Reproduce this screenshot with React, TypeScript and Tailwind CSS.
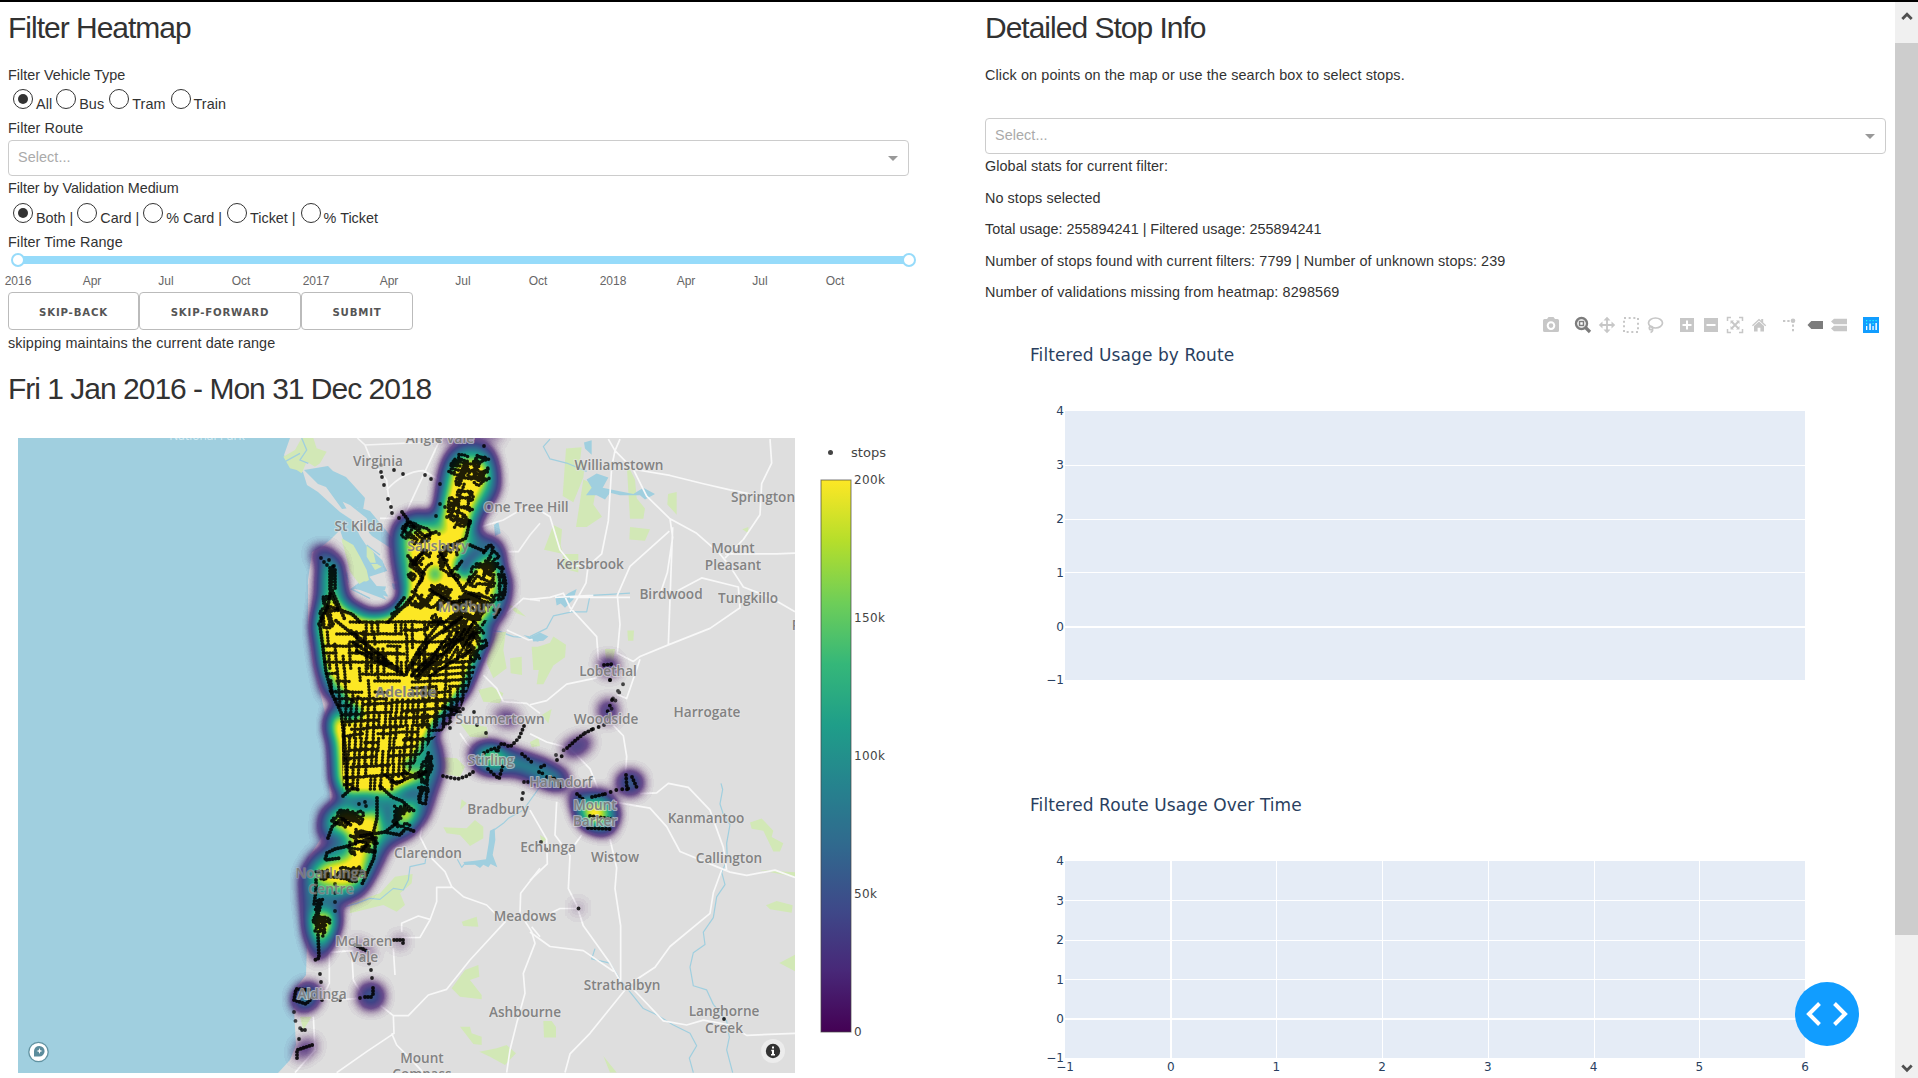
import React from "react";

type Pt = [number, number];

/* ---------- stop network ---------- */

function makeRandom(seed: number) {
  let s = seed;
  return () => {
    s = (s * 1664525 + 1013904223) % 4294967296;
    return s / 4294967296;
  };
}

// Suburbs: centre x, centre y, radius x, radius y, street angle, number of street runs
const SUBURBS: number[][] = [
  [470, 470, 22, 18, 20, 9],
  [481, 472, 10, 16, 60, 4],
  [461, 505, 13, 25, 15, 9],
  [416, 533, 15, 12, 35, 5],
  [422, 570, 15, 22, 40, 6],
  [450, 563, 12, 20, 35, 6],
  [437, 598, 30, 13, 40, 12],
  [482, 578, 14, 16, 20, 6],
  [490, 560, 9, 17, 45, 6],
  [499, 584, 7, 20, 5, 4],
  [474, 607, 26, 14, 30, 12],
  [452, 630, 28, 18, 50, 10],
  [474, 642, 14, 18, 50, 7],
  [329, 612, 9, 20, 70, 6],
  [348, 818, 18, 9, 30, 8],
  [402, 816, 10, 13, 40, 6],
  [426, 768, 9, 18, 10, 6],
  [423, 795, 6, 14, 10, 3],
  [362, 843, 16, 14, 5, 7],
  [341, 873, 25, 10, 10, 8],
  [320, 918, 10, 20, 10, 7],
];

function suburbPaths(): string {
  const rnd = makeRandom(91);
  const out: string[] = [];
  for (const [cx, cy, rx, ry, ang, n] of SUBURBS) {
    for (let i = 0; i < n; i++) {
      let x = cx + (rnd() * 2 - 1) * rx * 0.85;
      let y = cy + (rnd() * 2 - 1) * ry * 0.85;
      let dir = Math.floor(rnd() * 4);
      let d = `M${x.toFixed(1)} ${y.toFixed(1)}`;
      for (let k = 0; k < 9; k++) {
        if (rnd() < 0.3) dir += rnd() < 0.5 ? 1 : 3;
        const a = ((ang + dir * 90 + (rnd() - 0.5) * 44) * Math.PI) / 180;
        const nx = x + Math.cos(a) * 5;
        const ny = y + Math.sin(a) * 5;
        if (((nx - cx) / rx) ** 2 + ((ny - cy) / ry) ** 2 > 1.1) {
          dir += 1;
          continue;
        }
        x = nx;
        y = ny;
        d += `L${x.toFixed(1)} ${y.toFixed(1)}`;
      }
      out.push(d);
    }
  }
  return out.join("");
}

// The regular street grid around the city centre
function gridPaths(): string {
  const rnd = makeRandom(5);
  const out: string[] = [];
  const run = (a: Pt, b: Pt, keep: number) => {
    const len = Math.hypot(b[0] - a[0], b[1] - a[1]);
    const n = Math.max(1, Math.round(len / 13));
    for (let i = 0; i < n; i++) {
      if (rnd() > keep) continue;
      const p = i / n;
      const q = (i + 1) / n;
      const j = (rnd() - 0.5) * 1.6;
      out.push(
        `M${(a[0] + (b[0] - a[0]) * p + j).toFixed(1)} ${(a[1] + (b[1] - a[1]) * p).toFixed(1)}L${(a[0] + (b[0] - a[0]) * q + j).toFixed(1)} ${(a[1] + (b[1] - a[1]) * q + j).toFixed(1)}`
      );
    }
  };
  for (const x of [343, 348, 354, 360, 366, 372, 377, 383, 389, 394, 400, 405, 411, 416, 422, 428, 435, 442, 449]) run([x + 3, 700], [x - 2, 790], 0.8);
  for (const y of [704, 713, 720, 728, 734, 742, 749, 757, 766, 776, 783]) run([338, y + 2], [456, y - 5], 0.74);
  for (const x of [327, 334, 341, 348, 356, 364, 374, 384]) run([x, 632], [x + 6, 705], 0.66);
  for (const y of [634, 646, 653, 662, 674, 681, 692, 699]) run([324, y], [400, y], 0.66);
  for (const x of [366, 371, 377, 383, 396, 401, 406, 412, 418, 425]) run([x, 622], [x + 1, 676], 0.8);
  for (const y of [622, 642]) run([350, y], [456, y], 0.98);
  for (const y of [630, 654, 664]) run([380, y], [440, y], 0.45);
  for (const y of [664, 670, 676, 682, 688, 694, 702, 710]) run([412, y], [474, y - 3], 0.86);
  for (const x of [424, 430, 437, 446, 452, 458, 464, 470]) run([x, 650], [x - 2, 728], 0.74);
  for (let k = 0; k < 7; k++) run([418 + k * 8, 680 - k * 5], [442 + k * 8, 642 - k * 5], 0.85);
  return out.join("");
}

const MAIN_ROADS =
  "M404 675L335 620M404 675L350 630M400 672L355 650M407 672L430 640L462 617M412 675L440 648L480 632M416 678L436 655M408 668L420 648L440 622M425 668L460 640M430 676L470 650M398 668L380 660L352 642" +
  "M320 626L323 648L326 672L332 694L341 712L345 745L347 790M319 624L328 606L331 588L333 566M330 568V592M335 570V590M331 588L345 620M328 606L352 614L360 622" +
  "M388 622L404 606L412 596M392 614L408 604M404 598L396 608M402 512L408 520L404 533M409 522L424 536L436 532M452 545L466 538L470 520M470 545L486 552" +
  "M408 556L424 574L414 592M424 550L412 566M430 590L450 602L470 600M440 552L450 570L462 588M476 572L462 590L480 598";

const MAIN_SOUTH =
  "M380 786L392 797L402 801L410 808L416 812M343 796L352 788L360 790M377 798V818L372 838L361 852M328 838L332 827L342 818L352 826M361 836L385 832L400 835L406 828L416 832M385 832L398 822" +
  "M327 853L335 849L348 846L358 842L376 838M327 853L325 860L340 858M376 838L374 858L362 884M316 880V890L314 905M318 935L319 958L313 961M405 772L416 778L428 770M385 775L396 784L420 772";

const SPARSE_CHAINS =
  "M604 725L625 680M610 680L608 674M618 691L612 700M556 755L567 748M335 884V918M362 958L372 966M294 1012L296 1024L302 1030M541 842L548 852";

const SINGLE_STOPS: Pt[] = [
  [381, 465], [381, 472], [382, 477], [394, 470], [403, 474], [425, 475], [431, 479], [440, 484], [439, 441], [484, 446], [384, 485], [388, 499], [391, 507], [392, 513],
  [399, 518], [436, 516], [440, 504], [445, 507], [447, 517], [439, 534], [321, 558], [324, 562], [327, 565], [329, 560], [334, 566],
  [371, 666], [358, 697], [348, 706], [352, 700], [359, 804], [365, 802], [366, 806], [450, 728], [463, 709], [474, 712], [477, 725], [486, 733],
  [371, 970], [372, 978], [320, 974], [321, 982], [322, 1000], [340, 1000], [360, 998], [305, 1030], [299, 1039], [302, 1030],
  [524, 782], [528, 782], [523, 793], [522, 799], [402, 774], [410, 738],
];

/* ---------- map labels ---------- */

const LABELS: [string, number, number, string?][] = [
  ["Angle Vale", 440, 438], ["Virginia", 378, 461], ["St Kilda", 359, 526], ["Salisbury", 438, 546, "on"], ["Modbury", 469, 607, "on"],
  ["Adelaide", 406, 692, "on"], ["Summertown", 500, 719], ["Stirling", 491, 760], ["Bradbury", 498, 809], ["Clarendon", 428, 853],
  ["Noarlunga", 331, 873, "on"], ["Centre", 331, 889, "on"], ["McLaren", 364, 941], ["Vale", 364, 957], ["Aldinga", 322, 994],
  ["Mount", 422, 1058], ["Compass", 422, 1074], ["Ashbourne", 525, 1012], ["Meadows", 525, 916], ["Echunga", 548, 847],
  ["One Tree Hill", 526, 507], ["Williamstown", 619, 465], ["Springton", 763, 497], ["Kersbrook", 590, 564], ["Mount", 733, 548],
  ["Pleasant", 733, 565], ["Birdwood", 671, 594], ["Tungkillo", 748, 598], ["Lobethal", 608, 671], ["Woodside", 606, 719],
  ["Harrogate", 707, 712], ["Hahndorf", 561, 782], ["Mount", 595, 805], ["Barker", 595, 821], ["Kanmantoo", 706, 818],
  ["Wistow", 615, 857], ["Callington", 729, 858], ["Strathalbyn", 622, 985], ["Langhorne", 724, 1011], ["Creek", 724, 1028],
  ["P", 796, 625],
];

const suburbD = suburbPaths();
const gridD = gridPaths();

function AdelaideMap() {
  return (
    <svg viewBox="18 438 777 635" className="h-[635px] w-[777px] shrink-0" aria-label="Map of Adelaide">
      <defs>
        <filter id="heat" x="0" y="400" width="800" height="700" filterUnits="userSpaceOnUse" colorInterpolationFilters="sRGB">
          <feGaussianBlur in="SourceGraphic" stdDeviation="6.2" result="density" />
          <feColorMatrix in="density" type="matrix" values="0 0 0 1 0  0 0 0 1 0  0 0 0 1 0  0 0 0 0 1" />
          <feComponentTransfer result="colour">
            <feFuncR type="table" tableValues=".267 .28 .255 .208 .165 .129 .133 .267 .478 .74 .992 .992 .992" />
            <feFuncG type="table" tableValues=".004 .141 .267 .373 .47 .569 .659 .749 .82 .875 .906 .906 .906" />
            <feFuncB type="table" tableValues=".329 .459 .529 .553 .557 .549 .518 .439 .318 .15 .145 .145 .145" />
          </feComponentTransfer>
          <feComponentTransfer in="density" result="mask">
            <feFuncA type="table" tableValues="0 .78 1 1 1 1 1 1 1 1 1 1 1" />
          </feComponentTransfer>
          <feComposite in="colour" in2="mask" operator="in" />
        </filter>
        <clipPath id="metro">
          <path d="M316 618L335 598L352 612L405 618L450 610L492 622L482 650L468 690L457 718L434 738L420 755L407 776L396 793L343 793L341 712L328 690Z" />
        </clipPath>
        <mask id="quiet" maskUnits="userSpaceOnUse" x="0" y="400" width="800" height="700">
          <rect x="0" y="400" width="800" height="700" fill="#fff" />
          <g fill="#000">
            <ellipse cx="352" cy="713" rx="12" ry="7" fillOpacity=".9" />
            <ellipse cx="435" cy="574" rx="6" ry="9" fillOpacity=".8" />
            <path fillOpacity=".85" d="M456 575L455 560L468 552L484 545L488 554L472 562L466 576Z" />
            <path fillOpacity=".6" d="M470 628L492 615L500 622L480 634Z" />
            <ellipse cx="410" cy="765" rx="9" ry="5" fillOpacity=".9" />
            <path fillOpacity=".65" d="M345 800L372 796L378 804L352 808ZM380 808L392 804L392 824L382 828ZM395 790L416 785L420 800L404 800ZM330 836L350 832L344 842L326 848ZM318 900L338 900L334 908L316 908Z" />
          </g>
        </mask>
      </defs>

      <rect x="18" y="438" width="777" height="635" fill="#dedede" />

      {/* gulf and northern coast */}
      <path
        fill="#a0cfdf"
        d="M18 438H290L284 455L290 465L303 472L307 485L318 492L330 503L340 512L352 520L360 536L366 545L382 560L389 575L385 590L375 592L362 586L352 590L345 575L352 560L345 545L340 530L330 540L320 548L312 552L308 580L308 620L312 660L322 700L330 735L328 760L330 800L328 825L320 840L310 855L303 880L302 920L307 945L306 975L298 985L294 1010L296 1045L290 1060L278 1073H18Z"
      />
      <path fill="#a0cfdf" d="M304 470L328 466L333 471L346 477L365 498L363 510L358 507L342 509L326 487L318 484ZM338 491L352 505L370 511L394 540L392 549L372 536L361 524Z" />
      <g transform="translate(270 430) scale(.33333)">
        <path fill="#d2e8b6" d="M40 80L75 60L95 24H130L140 55L170 65L150 100L135 110L110 95L95 130L80 120L60 115ZM215 325L250 345L270 380L290 420L297 450L262 470L235 420ZM290 345L310 365L318 400L335 410L315 420L290 380Z" />
        <path fill="#a0cfdf" d="M240 475L265 450L290 455L330 485L350 510L310 495L270 480ZM365 435L385 433L384 450L372 455ZM365 460L384 462V480L370 478ZM320 475L345 482L355 500L335 495ZM672 285L685 275L692 310L675 318ZM760 615L785 620L805 615V635L780 628Z" />
        <path fill="none" stroke="#a0cfdf" strokeWidth="4" d="M95 24L110 60L90 90L115 100M45 95L90 70M290 345L330 375M298 400H335M292 420L330 430M655 600L690 605L730 620L760 622M240 475L300 505M570 27L560 70L590 90" />
        <path fill="#dedede" d="M218 215L240 225L290 265L300 300L290 320L262 290L240 255ZM205 345L225 345L262 420L275 452L240 478L232 430ZM298 440L360 420L375 440L362 470L320 468Z" />
        <path fill="#d2e8b6" d="M215 328L240 345L262 370L285 415L292 448L268 462L240 425Z" />
        <path fill="#d2e8b6" d="M665 610L708 605L700 660L710 715L670 745L650 700ZM700 515L740 550L768 560L740 535ZM625 780L665 770L700 790L690 820L640 815ZM720 685L755 680L756 735L722 730ZM785 650H810V720H790ZM570 880L650 890L655 925L600 920Z" />
        <path fill="none" stroke="#f5f5f5" strokeWidth="5" d="M262 24L285 45L305 95L350 150L355 195L365 240L375 265M285 45L515 35M350 180Q400 125 460 122L510 150M512 24L400 265H330M635 290L700 270L760 235L810 225M810 280L780 315L745 365L715 365M710 550L760 505L810 512M640 735L680 775L700 815L770 820L810 850M710 600L775 630L810 625M570 910L590 940L610 960" />
      </g>

      {/* southern hills */}
      <g transform="translate(270 740) scale(.33333)">
        <path fill="#d2e8b6" d="M500 50L560 55L585 80L570 110L510 100ZM520 262L590 265L615 240L640 260V295L600 318L570 285L530 280ZM575 178L590 190L570 210ZM240 490L330 460L375 410L428 402L425 430L390 460L405 495L380 515L340 495L240 520ZM545 745L585 690L625 675L628 710L600 720L635 765V778L570 770ZM575 545L620 530L625 560L580 558ZM570 860L600 860L605 880L635 890V915L610 912ZM628 935L680 925L710 915L738 940L705 975L660 950ZM90 830L125 830L100 870Z" />
        <path fill="#a0cfdf" d="M660 272L674 265L676 300L668 345L682 382L662 372L655 382L640 374L630 384L615 374L585 375L580 366L615 362L648 358L656 310Z" />
        <path fill="none" stroke="#a0cfdf" strokeWidth="3.5" strokeLinejoin="round" d="M225 500L260 490L300 475L330 478L370 445L400 450L415 420L420 380L465 370L468 350M562 358L575 382L585 370M672 270L700 250L715 235L760 210L810 140" />
        <path fill="none" stroke="#f8f8f8" strokeWidth="5" strokeLinejoin="round" d="M460 240L450 290L480 350L525 395L545 440L580 470L650 495L680 525L706 545L600 660L530 748L475 765L415 827H370L330 795M545 442H500V485L480 540L450 592L395 593M395 575V550L445 528L480 538M180 637L245 632L250 720L280 770M178 580V730L155 775L190 780L270 775M370 625L375 705M370 827L372 880L290 935L200 998M365 880L380 915L420 955L460 998M810 385L752 460L750 520L785 575L795 610L760 700L765 760L740 850L720 930L710 998M785 535L810 525M785 560L810 590M450 220L465 240M130 830L135 930L75 998" />
      </g>

      {/* eastern ranges */}
      <g transform="translate(530 430) scale(.33333 .41322)">
        <path fill="#d2e8b6" d="M108 45L155 42L150 75L165 80L160 115L130 175L98 160ZM160 120L200 135L190 180L216 210L170 235L138 235ZM70 230L96 240L92 280L100 300L42 290ZM98 300L145 300V345L100 335ZM290 80L315 120L320 165L345 190L340 215L300 215ZM300 235L360 240L345 268L298 265ZM414 155L440 150V205L412 180ZM292 485H312L310 510H294ZM5 530L60 515L70 500L108 520L105 550L70 570L40 615H20L30 560ZM225 530L255 530L250 560H228ZM35 690L65 675L55 710ZM0 755L25 745L30 765L5 768ZM637 240L655 235V250ZM660 950L695 940L730 970L725 985L760 1000L750 1020L730 1020L700 970L665 965ZM690 1065L795 1070V1082ZM708 1150L740 1140L788 1150L785 1168L720 1160ZM748 1290L795 1270V1310ZM40 1430H65L78 1445V1470H42ZM220 1515L260 1555H240ZM250 950L270 955L255 965ZM30 980L50 990L35 1000Z" />
        <path fill="#a0cfdf" d="M162 30L185 25V60L165 45ZM170 120L200 105L235 115L218 140L250 145L310 155L340 140L375 155L345 168L330 158L270 158L240 152L225 168L200 158L168 158L185 140ZM75 400L100 405L115 395L140 385L130 410L105 430L92 420L80 425ZM5 500L30 490L55 500L40 510L10 512Z" />
        <path fill="none" stroke="#a0cfdf" strokeWidth="1.2" vectorEffect="non-scaling-stroke" strokeLinejoin="round" d="M60 22L40 40L60 70L110 80L170 100M0 500L50 480L70 450L125 440L170 440L180 400L240 398L300 395M573 855L578 870L570 905L580 930L600 955L590 1000L592 1040L575 1070L585 1100L560 1130L550 1180L520 1215L525 1245L490 1265L480 1300L490 1345L530 1355L550 1390L590 1430L598 1470L590 1500L608 1555M195 1255L185 1280L240 1290L270 1330L310 1370L340 1400L380 1415L430 1440L480 1460L500 1490L478 1520L490 1555" />
        <path fill="none" stroke="#f8f8f8" strokeWidth="1.7" vectorEffect="non-scaling-stroke" strokeLinejoin="round" d="M235 22L255 50L245 90L235 220L215 300L180 325L130 330L90 290L60 210L0 180M270 22L255 50L310 95L350 160L420 215L500 250L570 300L600 330L640 380L720 405L795 440M310 95L420 110L520 130L600 145L690 160M720 22L725 80L695 130L690 205L640 265L585 310M420 215L428 260L412 345L390 398M418 245L300 330L262 400M428 235L415 520L540 480L630 430L625 380L515 358L440 390M585 300L610 300L740 300L795 298M0 410L60 405L100 395L120 430L200 500L205 555L235 570M175 325L168 370L120 440M262 400L270 470L262 540L310 560L330 548L415 520M120 405L300 405M330 555L290 650L262 640M0 665L50 655L110 615L200 600M75 405L190 400M250 715L280 740L290 790L285 850M0 735L50 755L120 770L180 820L205 870M250 900L360 915L410 960L450 1020L540 1050L600 1070L650 1078L735 1065L795 1083M330 880L380 878L415 855L475 865L540 920L580 1010L590 1065M575 1065L550 1120L540 1170L420 1250L375 1300L300 1340L240 1400L180 1460L120 1510L105 1555M0 920L50 990L52 1050L0 1090M80 900L75 980L120 1030L115 1110L140 1150L160 1200L240 1290L275 1340M155 980L120 1020M240 990L260 1060L255 1110L272 1200V1340M300 1345L400 1430L470 1440L520 1428L600 1440L650 1465L795 1460M140 1158L90 1158L40 1178M0 1215L60 1250L160 1260L250 1310" />
      </g>

      {/* passenger density */}
      <g filter="url(#heat)">
        <g mask="url(#quiet)">
          <path fillOpacity=".5" d="M447 464L454 451L466 447L481 447L490 454L494 470L495 488L487 502L477 518L473 533L482 541L493 541L500 552L501 568L507 582L505 600L498 616L489 634L480 652L473 668L464 690L442 716L425 738L410 745L405 600L397 560L395 535L401 522L415 515L436 518L441 500L443 480Z" />
          <path d="M453 470L464 461L482 463L488 474L480 490L471 508L468 526L462 538L450 536L445 524L444 510L448 495L452 482Z" />
          <path d="M408 536L420 530L440 534L462 540L464 552L456 562L462 578L470 586L478 562L492 558L496 580L490 600L480 620L470 640L400 640L400 612L410 590L411 560Z" />
          <path d="M330 598L345 610L362 620L388 618L405 602L430 590L490 596L486 620L482 640L472 664L462 688L440 714L424 738L414 750L420 778L390 792L345 792L337 782L336 742L330 728L334 712L345 706L352 694L338 684L325 668L322 640L318 625L322 608Z" />
          <path fillOpacity=".5" d="M316 628L320 600L322 566L335 562L341 590L345 602L370 616L390 614L406 600L410 620L360 720L326 690L320 660Z" />
          <path fillOpacity=".32" d="M312 553L325 548L339 562L341 600H328L324 566Z" />
          <path fillOpacity=".42" d="M332 725L345 700L420 720L436 744L440 768L432 790L424 815L410 832L386 844L375 868L360 892L338 902L336 925L328 945L318 960L309 935L305 900L304 875L314 858L332 845L322 832L324 814L342 800L338 780Z" />
          <path fillOpacity=".88" d="M330 822L342 810L356 812L362 818L382 808L380 835L368 850L362 880L345 888L314 882L320 866L350 858L352 842ZM396 812L412 800L414 816L402 828ZM412 776L426 762L424 774L400 790L370 792L384 778ZM312 913L330 911L334 925L323 944L313 932Z" />
          <path fillOpacity=".42" d="M472 750L490 744L515 754L545 764L566 776L562 788L545 784L520 772L494 770L478 768Z" />
          <path fillOpacity=".6" d="M482 750L500 750L504 766L488 770Z" />
          <path fillOpacity=".42" d="M578 802L606 799L616 812L610 829L588 826L579 815Z" />
          <ellipse cx="594" cy="813" rx="11" ry="8" />
          <path fillOpacity=".27" d="M570 792L607 793L615 815L606 834L588 828L578 812Z" />
          <ellipse cx="630" cy="783" rx="11" ry="10" fillOpacity=".3" />
          <path fillOpacity=".22" d="M562 750L575 740L590 737L588 747L572 756ZM600 660L614 659L617 672L604 674ZM600 706L612 700L616 716L604 722Z" />
          <path fillOpacity=".42" d="M294 998L306 985L318 990L314 1004L300 1010Z" />
          <circle cx="371" cy="996" r="11" fillOpacity=".27" />
          <path fillOpacity=".15" d="M352 938L368 948L376 956L362 954ZM396 938H404V945H396ZM295 1050L305 1040L316 1042L314 1050L298 1060ZM495 711L515 712L518 725L500 724ZM440 432H500V438H440Z" />
          <path fillOpacity=".08" d="M574 904H582V912H574Z" />
        </g>
      </g>

      {/* stops */}
      <g fill="none" stroke="#000" strokeOpacity=".88" strokeWidth="3.9" strokeLinecap="round" strokeLinejoin="round" strokeDasharray="0 3">
        <path d={suburbD} strokeWidth="3.6" />
        <g clipPath="url(#metro)">
          <path d={gridD} strokeWidth="3.5" />
        </g>
        <path d={MAIN_ROADS} />
        <path d={MAIN_SOUTH} />
        <path d="M443 706L449 709L460 712" />
        <path d="M524 726L519 738L510 747L502 743L496 751M443 776L452 778L458 779L467 776L476 770M484 753L494 748L500 752M488 769L499 779L503 765M522 754L534 764" strokeDasharray="0 4" />
        <path d="M541 767L547 764M539 772L544 774M547 777L556 779L562 789M577 794L583 799M592 797L605 794M626 775L627 790M632 777L637 788M588 828L610 829M590 816L613 819M604 665L613 664M567 748L577 739L585 733M585 733L593 729" strokeDasharray="0 3.6" />
        <path d="M605 794L616 790L632 788M593 729L604 725M612 700L607 713M557 760L562 756M610 680V686" strokeDasharray="0 6" />
        <path d={SPARSE_CHAINS} strokeDasharray="0 9" strokeOpacity=".7" />
        <path d="M355 945L367 951M394 940H403V944M294 1000L296 989L310 990M294 1000L306 1004L312 998M297 1058L297 1050L306 1047L315 1044M365 997H374M373 988V996" />
      </g>
      <g fill="#000" fillOpacity=".82">
        {SINGLE_STOPS.map(([x, y], i) => (
          <circle key={i} cx={x} cy={y} r="1.9" />
        ))}
        <circle cx="578.5" cy="908.5" r="1.9" />
        <circle cx="724" cy="1019" r="1.9" />
      </g>

      {/* place names */}
      <g fontFamily='"Open Sans", sans-serif' textAnchor="middle" fill="#7c7c7c" fillOpacity=".96" stroke="#e4e4e4" strokeLinejoin="round" paintOrder="stroke" letterSpacing="0">
        {LABELS.map(([name, x, y, on], i) => (
          <text key={i} x={x} y={y + 5} fontSize={on ? 14 : 13.6} strokeWidth={on ? 1.6 : 2.2} strokeOpacity={on ? 0.26 : 0.6} fontWeight={name === "Adelaide" ? 700 : 600}>
            {name}
          </text>
        ))}
        <text x="207" y="440" fill="#d9eef5" stroke="none" fontSize="12">National Park</text>
      </g>

      {/* attribution controls */}
      <circle cx="38.5" cy="1052" r="9.7" fill="#fff" stroke="#6293a2" strokeWidth="1.3" />
      <path d="M34 1056.5V1051a5.3 5.3 0 1 1 5.3 5.5Z" fill="#5c8c9c" />
      <path d="M39.5 1048l.8 2.2 2.2.8-2.2.8-.8 2.2-.8-2.2-2.2-.8 2.2-.8z" fill="#fff" />
      <circle cx="773" cy="1051" r="12" fill="#ececec" />
      <circle cx="773" cy="1051" r="7.2" fill="#333" />
      <path d="M772 1046.5h2v2h-2zM771.3 1049.7h2.7v4.3h1v1.5h-4v-1.5h1v-2.8h-.7z" fill="#fff" />
    </svg>
  );
}

/* ---------- controls ---------- */

function Radio({ label, checked, gap }: { label: string; checked?: boolean; gap: string }) {
  return (
    <label className={`flex items-start ${gap}`}>
      <span className="flex h-5 w-5 items-center justify-center rounded-full border border-[#333] bg-white">
        {checked && <span className="h-2.5 w-2.5 rounded-full bg-[#333]" />}
      </span>
      <span className="ml-[3px] mt-[5px] whitespace-pre leading-5">{label}</span>
    </label>
  );
}

function Select() {
  return (
    <div className="flex h-9 w-[901px] items-center justify-between rounded border border-[#ccc] bg-white pl-[9px] pr-2.5 text-[#aaa]">
      <span>Select...</span>
      <span className="h-0 w-0 border-x-[5px] border-t-[5px] border-x-transparent border-t-[#999]" />
    </div>
  );
}

const MARKS: [string, number][] = [
  ["2016", 0], ["Apr", 74], ["Jul", 148], ["Oct", 223], ["2017", 298], ["Apr", 371], ["Jul", 445], ["Oct", 520], ["2018", 595], ["Apr", 668], ["Jul", 742], ["Oct", 817],
];

function TimeSlider() {
  return (
    <div className="relative ml-2.5 h-9 w-[891px] pt-[3px]">
      <div className="h-2 bg-[#96dbfa]" />
      <span className="absolute -left-[7px] top-0 h-3.5 w-3.5 rounded-full border-2 border-[#96dbfa] bg-white" />
      <span className="absolute -right-[7px] top-0 h-3.5 w-3.5 rounded-full border-2 border-[#96dbfa] bg-white" />
      {MARKS.map(([m, x], i) => (
        <span key={i} className="absolute top-5 -translate-x-1/2 text-xs tracking-normal text-[#666]" style={{ left: x }}>
          {m}
        </span>
      ))}
    </div>
  );
}

function Button({ children, width }: { children: string; width: string }) {
  return (
    <button className={`h-[38px] ${width} rounded border border-[#bbb] bg-white pt-[3px] font-['DejaVu_Sans',sans-serif] text-[10.2px] leading-4 font-bold uppercase tracking-[0.8px] text-[#555]`}>
      {children}
    </button>
  );
}

function ColorBar() {
  return (
    <svg viewBox="795 438 114 635" className="h-[635px] w-[114px] shrink-0">
      <defs>
        <linearGradient id="viridis" x1="0" y1="1" x2="0" y2="0">
          <stop offset="0" stopColor="#440154" />
          <stop offset=".111" stopColor="#482878" />
          <stop offset=".222" stopColor="#3e4989" />
          <stop offset=".333" stopColor="#31688e" />
          <stop offset=".444" stopColor="#26828e" />
          <stop offset=".556" stopColor="#1f9e89" />
          <stop offset=".667" stopColor="#35b779" />
          <stop offset=".778" stopColor="#6ece58" />
          <stop offset=".889" stopColor="#b5de2b" />
          <stop offset="1" stopColor="#fde725" />
        </linearGradient>
      </defs>
      <g fontFamily='"DejaVu Sans", sans-serif' fontSize="12" fill="#444" letterSpacing="0">
        <circle cx="830.5" cy="452.5" r="2.5" />
        <text x="851" y="457" textLength="35" lengthAdjust="spacingAndGlyphs">stops</text>
        <rect x="821" y="480" width="30" height="552" fill="url(#viridis)" stroke="#444" strokeOpacity=".7" />
        <text x="854" y="484" textLength="31">200k</text>
        <text x="854" y="622" textLength="31">150k</text>
        <text x="854" y="760" textLength="31">100k</text>
        <text x="854" y="898" textLength="23">50k</text>
        <text x="854" y="1036">0</text>
      </g>
    </svg>
  );
}

/* ---------- right-hand charts ---------- */

function ModeBar() {
  return (
    <svg viewBox="1540 314 342 22" className="ml-[555px] h-[22px] w-[342px]" fill="#c7c7c7">
      <path fillRule="evenodd" d="M1543 320.5a1.5 1.5 0 0 1 1.5-1.5h2.5l1.5-2h5l1.5 2h2.5a1.5 1.5 0 0 1 1.5 1.5v10a1.5 1.5 0 0 1-1.5 1.5h-13a1.5 1.5 0 0 1-1.5-1.5zM1551 321.3a4.3 4.3 0 1 0 0 8.6 4.3 4.3 0 0 0 0-8.6zm0 2a2.3 2.3 0 1 1 0 4.6 2.3 2.3 0 0 1 0-4.6z" />
      <g fill="none" stroke="#7c7c7c">
        <circle cx="1581.5" cy="323.5" r="5.5" strokeWidth="2.4" />
        <path d="M1579.5 321.5h4v4h-4z" strokeWidth="1.5" />
        <path d="M1585.5 327.5l4.5 4.5" strokeWidth="3.2" />
      </g>
      <path d="M1607 316.8l3.5 3.7h-2.6v3.6h3.6v-2.6l3.7 3.5-3.7 3.5v-2.6h-3.6v3.6h2.6l-3.5 3.7-3.5-3.7h2.6v-3.6h-3.6v2.6l-3.7-3.5 3.7-3.5v2.6h3.6v-3.6h-2.6z" />
      <rect x="1624" y="318" width="14" height="14" fill="none" stroke="#c7c7c7" strokeWidth="2" strokeDasharray="2 2.67" />
      <g fill="none" stroke="#c7c7c7" strokeWidth="1.7">
        <ellipse cx="1655.5" cy="323" rx="7" ry="5" />
        <circle cx="1651" cy="328" r="1.7" />
        <path d="M1652.5 329.5q.5 2-2 3" />
      </g>
      <path fillRule="evenodd" d="M1680 318h14v14h-14zM1686 320.5v3.5h-3.5v2h3.5v3.5h2v-3.5h3.5v-2h-3.5v-3.5zM1704 318h14v14h-14zM1706.5 324v2h9v-2z" />
      <g fill="none" stroke="#c7c7c7" strokeWidth="1.5">
        <path d="M1727.5 321v-3.5h3.5M1739 317.5h3.5v3.5M1742.5 329v3.5h-3.5M1731 332.5h-3.5v-3.5" />
        <path d="M1731.5 321.5l7 7M1738.5 321.5l-7 7" strokeWidth="1.8" />
      </g>
      <path d="M1730.5 320.5h3.5l-3.5 3.5zM1739.5 320.5v3.5l-3.5-3.5zM1730.5 329.5v-3.5l3.5 3.5zM1739.5 329.5h-3.5l3.5-3.5z" />
      <path d="M1752 325.2l7-6.4 2.2 2v-1.8h2v3.6l3 2.6-.9 1-6.3-5.6-6.1 5.6zM1754 326l5-4.5 5 4.5v5.5h-3.6v-3.7h-2.8v3.7H1754z" />
      <path d="M1783 320h2.3v2h-2.3zM1787.3 320h2.3v2h-2.3zM1792 324.5h2v2.3h-2zM1792 329h2v2.3h-2z" />
      <circle cx="1793" cy="320.8" r="2.3" />
      <path fill="#7c7c7c" d="M1807.5 325l3.8-4h11.7v8h-11.7z" />
      <path d="M1831 321.5l3-2.7h13v5.4h-13zM1831 328.5l3-2.7h13v5.4h-13z" />
      <rect x="1863" y="317" width="16" height="16" fill="#119dff" />
      <path fill="#25fefd" d="M1866 320h1.2v1.2h-1.2zM1869.5 320h1.2v1.2h-1.2zM1872.5 320h1.2v1.2h-1.2zM1875.5 320h1.2v1.2h-1.2zM1866 323h1.2v1.2h-1.2zM1872.5 323h1.2v1.2h-1.2z" />
      <path fill="#fff" d="M1866 326h1.3v4h-1.3zM1869.3 323.5h1.5v6.5h-1.5zM1872.4 326h1.3v4h-1.3zM1875.4 323h1.5v7h-1.5z" />
    </svg>
  );
}

const Y_TICKS = ["4", "3", "2", "1", "0", "−1"];
const X_TICKS = ["−1", "0", "1", "2", "3", "4", "5", "6"];

function UsageChart({ height, vertical }: { height: number; vertical?: boolean }) {
  const step = height / 5;
  const colStep = 740 / 7;
  return (
    <svg width="770" height={height + 30} viewBox={`-25 -10 770 ${height + 30}`} className="ml-[55px]">
      <rect x="0" y="0" width="740" height={height} fill="#e5ecf6" />
      {Y_TICKS.slice(1, 5).map((t, i) => (
        <rect key={t} x="0" y={Math.round(step * (i + 1)) - (t === "0" && vertical ? 1 : 0)} width="740" height={t === "0" ? 2 : 1} fill="#fff" />
      ))}
      {vertical &&
        X_TICKS.slice(1, 7).map((t, i) => (
          <rect key={t} x={Math.round(colStep * (i + 1)) - (t === "0" ? 1 : 0)} y="0" width={t === "0" ? 2 : 1} height={height} fill="#fff" />
        ))}
      <g fontFamily='"DejaVu Sans", sans-serif' fontSize="12" fill="#2a3f5f" letterSpacing="0">
        {Y_TICKS.map((t, i) => (
          <text key={t} x="-1" y={step * i + 4.4} textAnchor="end">
            {t}
          </text>
        ))}
        {vertical &&
          X_TICKS.map((t, i) => (
            <text key={t} x={colStep * i} y={height + 13} textAnchor="middle">
              {t}
            </text>
          ))}
      </g>
    </svg>
  );
}

export default function App() {
  return (
    <div className="relative flex h-[1078px] w-[1918px] overflow-hidden border-t-2 border-black bg-white font-['Liberation_Sans',Arial,sans-serif] text-[14.4px] tracking-[0.07px] text-[#323232]">
      <main className="flex flex-1">
        <section className="w-[977px] pl-2">
          <h1 className="h-[61px] pt-1.5 text-[30px] leading-[39px] tracking-[-1px]">Filter Heatmap</h1>
          <div className="h-[26px] leading-6 tracking-normal">Filter Vehicle Type</div>
          <div className="flex h-[27px] pl-[5px]">
            <Radio label="All" checked gap="mr-1" />
            <Radio label="Bus" gap="mr-[5px]" />
            <Radio label="Tram" gap="mr-[5px]" />
            <Radio label="Train" gap="" />
          </div>
          <div className="-mt-px h-[25px] leading-[26px]">Filter Route</div>
          <Select />
          <div className="h-[27px] leading-6 tracking-[-0.07px]">Filter by Validation Medium</div>
          <div className="flex h-[27px] pl-[5px] tracking-normal">
            <Radio label="Both |" checked gap="mr-1" />
            <Radio label="Card |" gap="mr-1" />
            <Radio label="% Card |" gap="mr-[5px]" />
            <Radio label="Ticket |" gap="mr-[5px]" />
            <Radio label="% Ticket" gap="" />
          </div>
          <div className="h-[23px] leading-6">Filter Time Range</div>
          <TimeSlider />
          <div className="mt-[3px] flex">
            <Button width="w-[131px]">Skip-back</Button>
            <Button width="w-[162px]">Skip-forward</Button>
            <Button width="w-[112px]">Submit</Button>
          </div>
          <div className="h-[39px] leading-[26px] tracking-[0.08px]">skipping maintains the current date range</div>
          <h1 className="h-[69px] text-[30px] leading-[39px] tracking-[-1px]">Fri 1 Jan 2016 - Mon 31 Dec 2018</h1>
          <div className="ml-2.5 flex">
            <AdelaideMap />
            <ColorBar />
          </div>
        </section>

        <section className="flex-1 pl-2">
          <h1 className="h-[61px] pt-1.5 text-[30px] leading-[39px] tracking-[-1px]">Detailed Stop Info</h1>
          <p className="h-[55px] leading-6 tracking-[0.12px]">Click on points on the map or use the search box to select stops.</p>
          <Select />
          <div className="h-[31px] leading-6">Global stats for current filter:</div>
          <p className="h-[32px] leading-[26px]">No stops selected</p>
          <p className="h-[31px] leading-6 tracking-normal">Total usage: 255894241 | Filtered usage: 255894241</p>
          <p className="h-[32px] leading-[26px] tracking-[0.09px]">Number of stops found with current filters: 7799 | Number of unknown stops: 239</p>
          <p className="h-[34px] leading-6 tracking-[0.11px]">Number of validations missing from heatmap: 8298569</p>
          <ModeBar />
          <h2 className="ml-[45px] mt-[7px] h-[58px] font-['DejaVu_Sans',sans-serif] text-[17px] leading-6 tracking-[0.08px] text-[#2a3f5f]">Filtered Usage by Route</h2>
          <UsageChart height={269} />
          <h2 className="ml-[45px] mt-[93px] h-[58px] font-['DejaVu_Sans',sans-serif] text-[17px] leading-6 tracking-[0.08px] text-[#2a3f5f]">Filtered Route Usage Over Time</h2>
          <UsageChart height={197} vertical />
        </section>
      </main>

      <aside className="flex w-[23px] flex-col items-center bg-[#f0f0f0]">
        <svg viewBox="0 0 23 41" className="h-[41px] w-[23px]" fill="none" stroke="#505050" strokeWidth="2.8">
          <path d="M7.3 17l4.7-4.7 4.7 4.7" />
        </svg>
        <div className="h-[892px] w-full bg-[#cdcdcd]" />
        <svg viewBox="0 0 23 143" className="h-[143px] w-[23px]" fill="none" stroke="#505050" strokeWidth="2.8">
          <path d="M7.3 130.5l4.7 4.7 4.7-4.7" />
        </svg>
      </aside>

      <button className="absolute left-[1795px] top-[980px] flex h-16 w-16 items-center justify-center rounded-full bg-[#119dff]" aria-label="Developer tools">
        <svg viewBox="0 0 42 24" className="h-6 w-[42px]" fill="none" stroke="#fff" strokeWidth="4">
          <path d="M13.5 1.5L3 12l10.5 10.5M28.5 1.5L39 12 28.5 22.5" />
        </svg>
      </button>
    </div>
  );
}
